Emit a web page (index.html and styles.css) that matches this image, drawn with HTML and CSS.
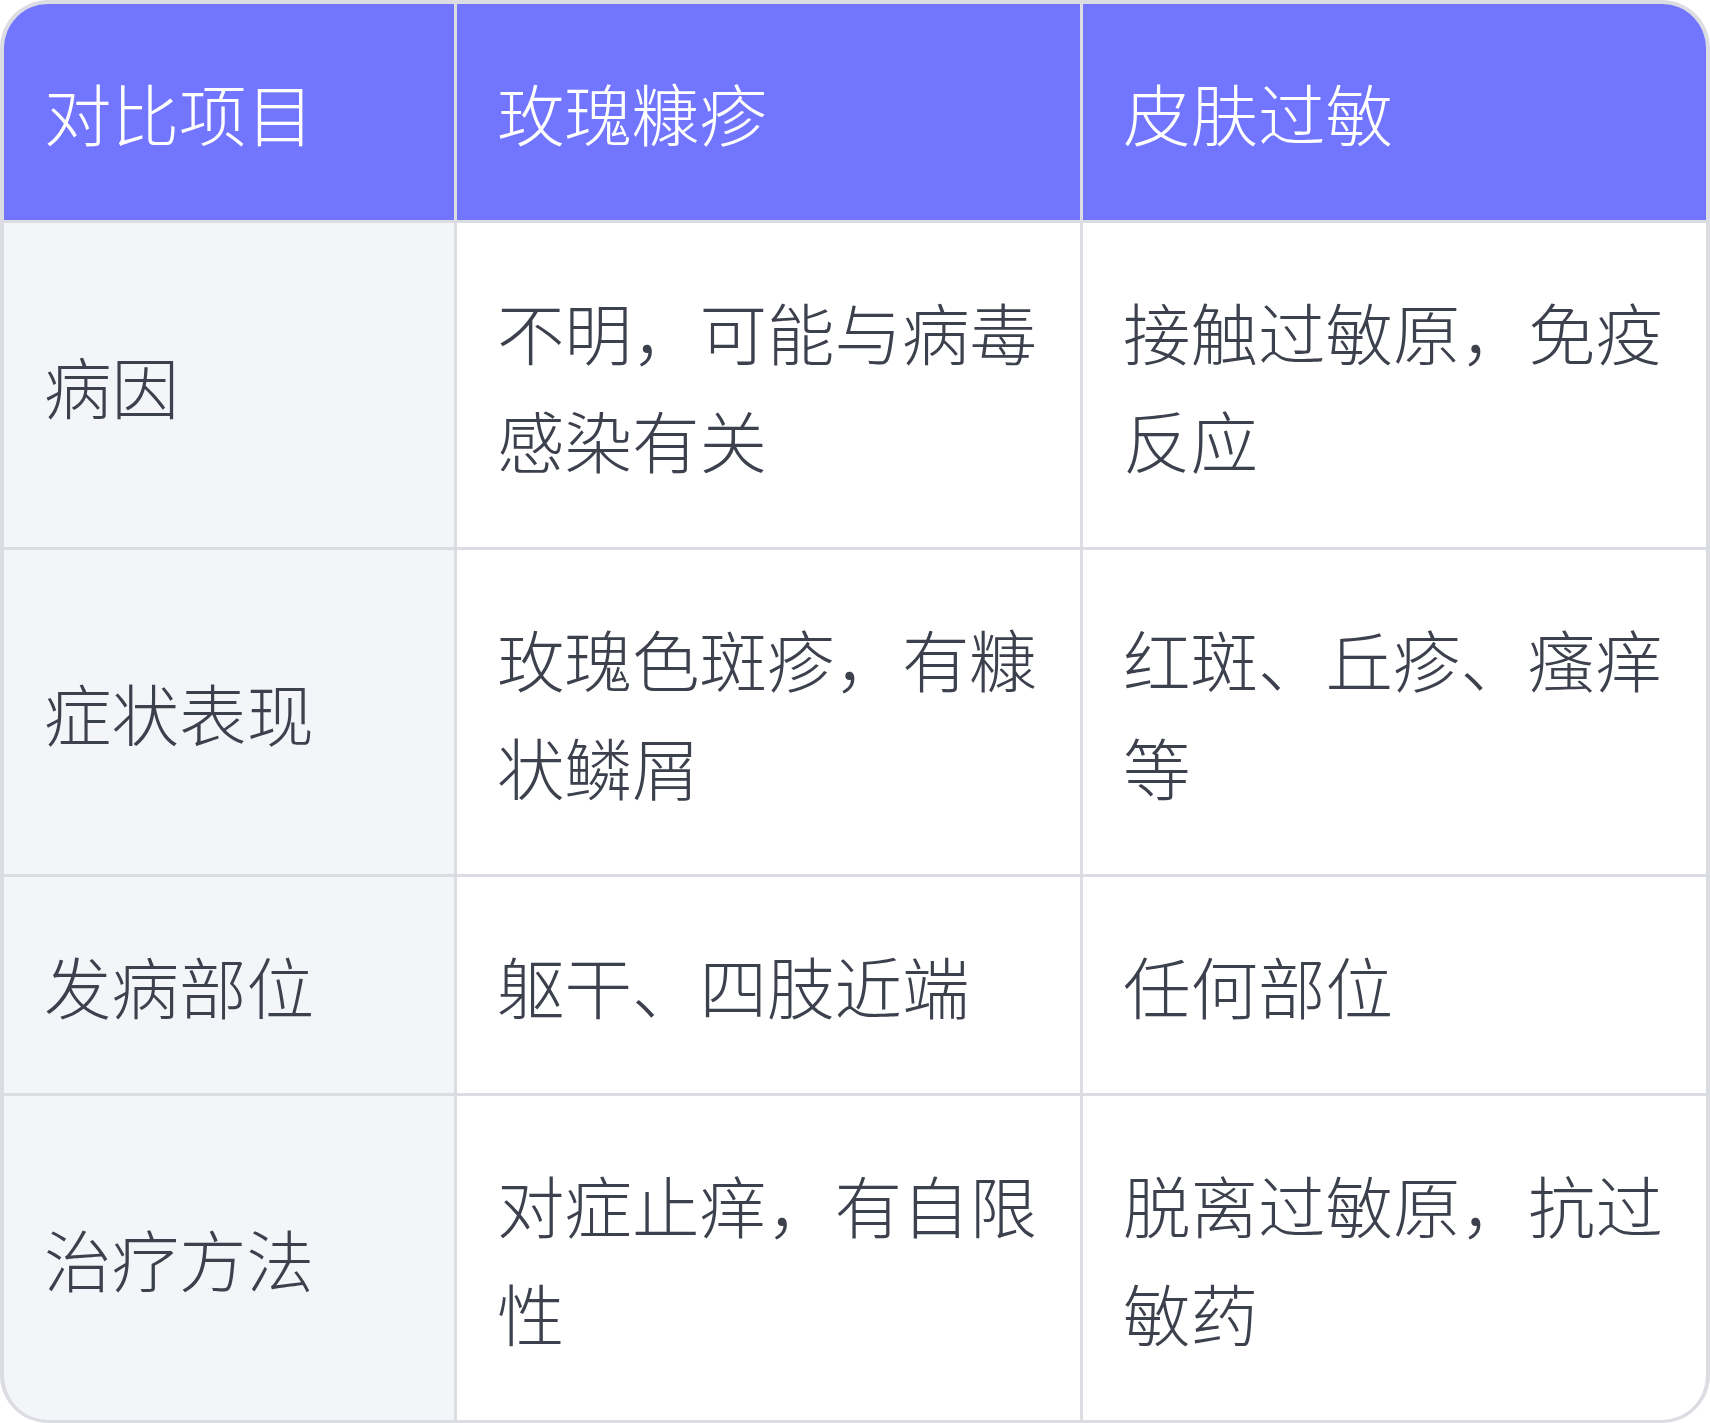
FILE: index.html
```html
<!DOCTYPE html>
<html lang="zh-CN">
<head>
<meta charset="utf-8">
<title>玫瑰糠疹与皮肤过敏对比</title>
<link rel="stylesheet" href="styles.css">
</head>
<body>
<div class="table">
  <div class="cell head">对比项目</div>
  <div class="cell head">玫瑰糠疹</div>
  <div class="cell head">皮肤过敏</div>

  <div class="cell label">病因</div>
  <div class="cell">不明，可能与病毒感染有关</div>
  <div class="cell">接触过敏原，免疫反应</div>

  <div class="cell label">症状表现</div>
  <div class="cell">玫瑰色斑疹，有糠状鳞屑</div>
  <div class="cell">红斑、丘疹、瘙痒等</div>

  <div class="cell label">发病部位</div>
  <div class="cell">躯干、四肢近端</div>
  <div class="cell">任何部位</div>

  <div class="cell label">治疗方法</div>
  <div class="cell">对症止痒，有自限性</div>
  <div class="cell">脱离过敏原，抗过敏药</div>
</div>
</body>
</html>
```

FILE: styles.css
```css
html, body {
  margin: 0;
  padding: 0;
  background: #ffffff;
}

.table {
  display: grid;
  grid-template-columns: 450px 623px 1fr;
  gap: 3px;
  background: #dcdde3;
  border: 4px solid #dcdde3;
  border-bottom-width: 3px;
  border-radius: 48px;
  overflow: hidden;
  font-family: "Noto Sans CJK SC", "Noto Sans", sans-serif;
  font-weight: 300;
  font-size: 67.5px;
  line-height: 108px;
  color: #3d414d;
}

.cell {
  display: flex;
  align-items: center;
  padding: 54px 40px;
  background: #ffffff;
  word-break: break-all;
}

.cell.label {
  background: #f4f5f9;
}

.cell.head {
  background: #7276ff;
  color: #ffffff;
}
```
